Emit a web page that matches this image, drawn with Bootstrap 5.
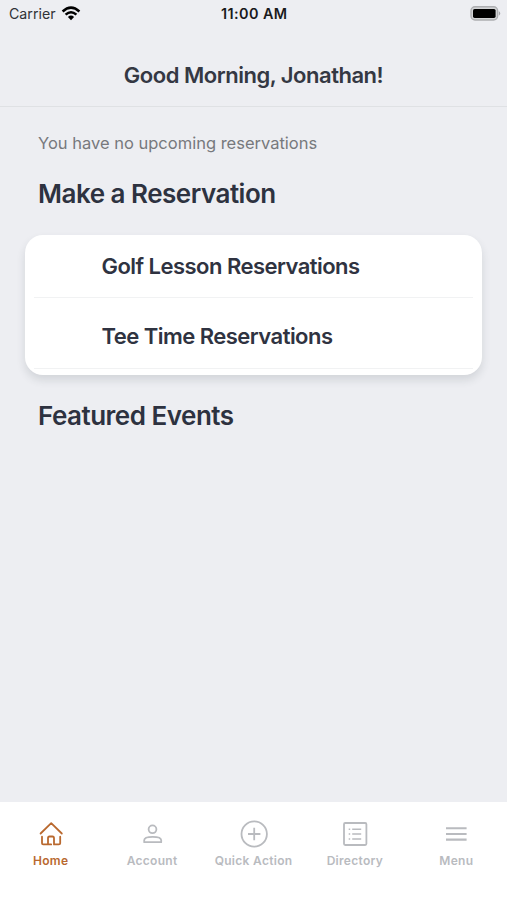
<!DOCTYPE html>
<html lang="en">
<head>
<meta charset="utf-8">
<meta name="viewport" content="width=device-width, initial-scale=1">
<title>Home</title>
<link rel="stylesheet" href="https://cdn.jsdelivr.net/npm/bootstrap@5.3.0/dist/css/bootstrap.min.css">
<style>
body{font-family:Inter,"Liberation Sans",sans-serif;background:#edeef2;color:#2d3240;height:900px;overflow:hidden}
svg{display:block}
.status-bar{height:27px;font-size:14.2px;line-height:27px;color:#303236}
.carrier{flex:0 0 221px;padding-left:9px}
.wifi{margin-left:5px}
.status-time{font-size:14.4px;font-weight:600;color:#191a1c;letter-spacing:.42px}
.page-head{height:80px;padding-top:32px;border-bottom:1px solid #dfe1e4}
.page-head h1{font-size:22px;line-height:32px;font-weight:600;letter-spacing:-.48px;color:#343843}
.px-main{padding-left:38px;padding-right:38px}
.notice{font-size:16.5px;line-height:24px;color:#77797d;padding-top:24px}
.section-title{font-size:26px;line-height:34px;font-weight:600;letter-spacing:-.5px}
.mt-make{margin-top:22px}
.res-card{margin:24px 25px 0;height:140px;border-radius:18px;padding:0 9px;box-shadow:0 5px 9px rgba(50,62,70,.14)}
.res-card a{font-size:22px;font-weight:600;letter-spacing:-.53px;color:#2f3341;padding-left:67.5px;height:71px;padding-top:7px;border-bottom:1px solid #f1f2f3}
.res-card a:first-child{height:63px;padding-top:0}
.tabs{height:98.5px;padding-top:17.5px}
.tabs a{flex:1 1 0;font-size:12px;line-height:16px;font-weight:600;letter-spacing:.3px;color:#b9bbbf}
.tabs a.active{color:#b9692f}
.tabs svg{width:30px;height:30px;fill:none;stroke:currentColor;margin-bottom:4px}
</style>
<script src="https://cdn.jsdelivr.net/npm/bootstrap@5.3.0/dist/js/bootstrap.bundle.min.js"></script>
</head>
<body class="d-flex flex-column">
<div class="status-bar d-flex align-items-center">
  <div class="carrier d-flex align-items-center"><span>Carrier</span>
    <svg class="wifi" width="20" height="16" viewBox="0 0 20 16" fill="none" stroke="#000" stroke-width="2.5"><path d="M1.6 5.5Q10-2.2 18.4 5.5M4.6 8.7Q10 3.7 15.4 8.7"/><path d="M6.9 11Q10 8.2 13.1 11L10 14.2Z" fill="#000" stroke="none"/></svg>
  </div>
  <span class="status-time">11:00 AM</span>
  <div class="d-flex justify-content-end pe-1 ms-auto">
    <svg width="33" height="16" viewBox="0 0 33 16"><rect x="1" y=".8" width="26.6" height="13.2" rx="4" fill="#d3d4d6" stroke="#adaeb1" stroke-width="1.4"/><rect x="3" y="2.9" width="22.6" height="9" rx="1.6"/><path d="M28.8 5Q31.8 7.4 28.8 9.8Z" fill="#a5a6a9"/></svg>
  </div>
</div>
<header class="page-head text-center"><h1 class="m-0">Good Morning, Jonathan!</h1></header>
<main class="flex-grow-1">
  <p class="notice mb-0 px-main">You have no upcoming reservations</p>
  <h2 class="section-title mb-0 px-main mt-make">Make a Reservation</h2>
  <div class="res-card bg-white">
    <a href="#" class="d-flex align-items-center text-decoration-none">Golf Lesson Reservations</a>
    <a href="#" class="d-flex align-items-center text-decoration-none">Tee Time Reservations</a>
  </div>
  <h2 class="section-title mb-0 px-main mt-4">Featured Events</h2>
</main>
<nav class="tabs d-flex bg-white text-center">
  <a href="#" class="active d-flex flex-column align-items-center text-decoration-none"><svg viewBox="0 0 30 30" stroke-width="1.8" stroke-linecap="round" stroke-linejoin="round"><path d="M4.6 14.5 15.2 4.2 25.8 14.5M6 17.7V24.2Q6 25.4 7.2 25.4H10.8Q12 25.4 12 24.2V19.2Q12 17.5 13.5 17.5H16.5Q18 17.5 18 19.2V25.4H22.9Q24.2 25.4 24.2 24.2V17.7M12 25.4H15.2"/></svg>Home</a>
  <a href="#" class="d-flex flex-column align-items-center text-decoration-none"><svg viewBox="0 0 30 30" stroke-width="1.8"><circle cx="15.5" cy="10.3" r="3.9"/><path d="M7.2 23.2V21.2C7.2 16.7 24.2 16.7 24.2 21.2V23.2Z" stroke-linejoin="round"/></svg>Account</a>
  <a href="#" class="d-flex flex-column align-items-center text-decoration-none"><svg viewBox="0 0 30 30" stroke-width="1.8"><circle cx="15.2" cy="15" r="12.7"/><path d="M15.2 8.8V21.2M9 15H21.4"/></svg>Quick Action</a>
  <a href="#" class="d-flex flex-column align-items-center text-decoration-none"><svg viewBox="0 0 30 30" stroke-width="1.8"><rect x="4" y="4" width="22.4" height="22" rx="1.2"/><path d="M12.2 10.2H21.2M12.2 15H21.2M12.2 20H21.2M8.7 10.2H10.2M8.7 15H10.2M8.7 20H10.2" stroke-width="1.6"/></svg>Directory</a>
  <a href="#" class="d-flex flex-column align-items-center text-decoration-none"><svg viewBox="0 0 30 30" stroke-width="2.1"><path d="M5 9.2H25.6M5 15H25.6M5 20.6H25.6"/></svg>Menu</a>
</nav>
</body>
</html>
